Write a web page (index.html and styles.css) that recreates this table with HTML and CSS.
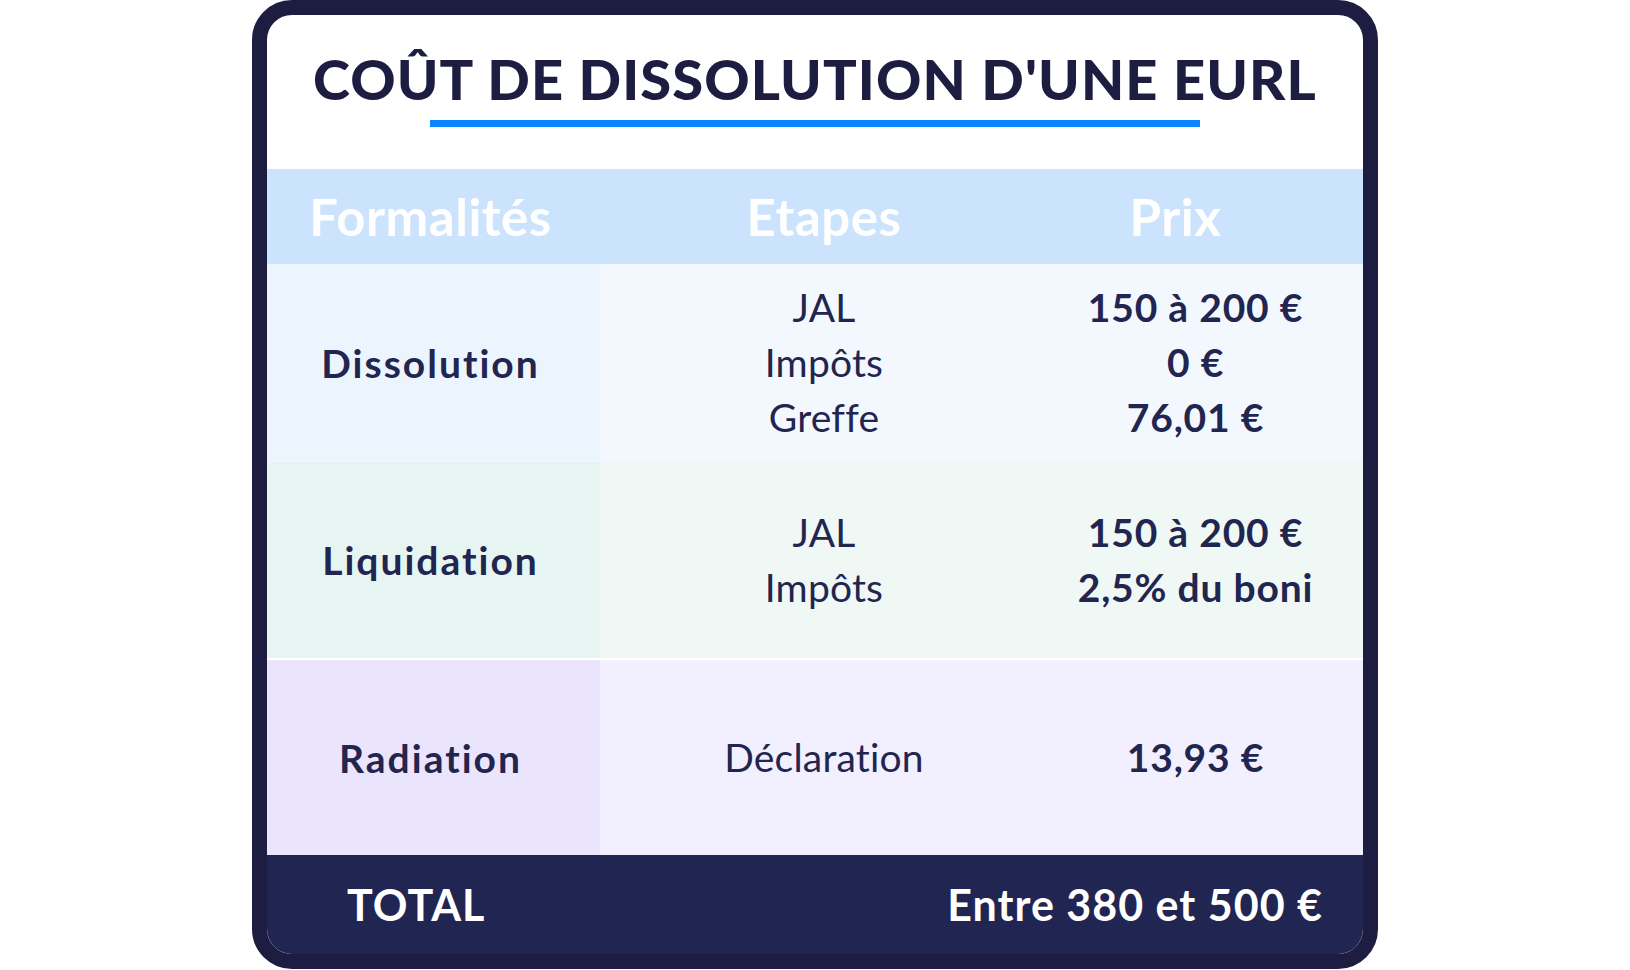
FILE: index.html
```html
<!DOCTYPE html>
<html lang="fr">
<head>
<meta charset="utf-8">
<title>Coût de dissolution d'une EURL</title>
<link rel="stylesheet" href="styles.css">
</head>
<body>
<div class="frame">
  <div class="title-block">
    <h1 class="title">COÛT DE DISSOLUTION D'UNE EURL</h1>
    <div class="underline"></div>
  </div>
  <div class="head-row">
    <div class="h-col1">Formalités</div>
    <div class="h-col2">Etapes</div>
    <div class="h-col3">Prix</div>
  </div>
  <div class="row row-blue">
    <div class="c1">Dissolution</div>
    <div class="c2"><span>JAL</span><span>Impôts</span><span>Greffe</span></div>
    <div class="c3"><span>150 à 200 €</span><span>0 €</span><span>76,01 €</span></div>
  </div>
  <div class="row row-green">
    <div class="c1">Liquidation</div>
    <div class="c2"><span>JAL</span><span>Impôts</span></div>
    <div class="c3"><span>150 à 200 €</span><span>2,5% du boni</span></div>
  </div>
  <div class="row row-purple">
    <div class="c1">Radiation</div>
    <div class="c2"><span>Déclaration</span></div>
    <div class="c3"><span>13,93 €</span></div>
  </div>
  <div class="total">
    <div class="t-label">TOTAL</div>
    <div class="t-value">Entre 380 et 500 €</div>
  </div>
</div>
</body>
</html>
```
FILE: styles.css
```css
* { box-sizing: border-box; }
html, body { margin: 0; padding: 0; background: #ffffff; }
body {
  width: 1630px;
  height: 970px;
  display: flex;
  justify-content: center;
  align-items: flex-start;
  font-family: Lato, "Open Sans", "Liberation Sans", sans-serif;
  font-variant-ligatures: none;
  font-feature-settings: "liga" 0, "clig" 0;
  color: #22254f;
}
.frame {
  width: 1126px;
  height: 969px;
  border: 15px solid #1c1d40;
  border-radius: 40px;
  background: #ffffff;
  overflow: hidden;
  display: flex;
  flex-direction: column;
}
.title-block {
  height: 154px;
  display: flex;
  flex-direction: column;
  align-items: center;
  padding-top: 35px;
}
.title {
  margin: 0;
  font-size: 56px;
  font-weight: 900;
  letter-spacing: 1.1px;
  line-height: 58px;
  color: #1c1d40;
}
.underline {
  margin-top: 12px;
  width: 770px;
  height: 7px;
  background: #0a84ff;
}
.head-row {
  height: 95px;
  background: #cbe3fd;
  display: grid;
  grid-template-columns: 333px 448px 1fr;
  align-items: center;
  color: #ffffff;
  font-weight: 700;
  font-size: 51px;
  letter-spacing: 0.5px;
  text-align: center;
}
.h-col1 { padding-right: 6px; }
.h-col3 { padding-right: 60px; }
.row {
  display: grid;
  grid-template-columns: 333px 448px 1fr;
  height: 197px;
  font-size: 39px;
}
.row > div {
  display: flex;
  flex-direction: column;
  justify-content: center;
  align-items: center;
}
.row .c1 { font-weight: 700; letter-spacing: 2px; padding-right: 6px; }
.row .c2 { font-weight: 400; line-height: 55px; letter-spacing: 0.2px; }
.row .c3 { font-weight: 700; line-height: 55px; padding-right: 20px; letter-spacing: 0.8px; }
.row-blue .c1 { background: #ecf4fd; }
.row-blue .c2, .row-blue .c3 { background: #f2f8fd; }
.row-green { border-top: 1px solid #f1f8fc; }
.row-green .c1 { background: #e6f5f1; }
.row-green .c2, .row-green .c3 { background: #eff8f5; }
.row-purple { border-top: 2px solid #ffffff; }
.row-purple .c1 { background: #eae5fd; }
.row-purple .c2, .row-purple .c3 { background: #f2f0fe; }
.total {
  flex: 1;
  background: #212552;
  color: #ffffff;
  font-weight: 700;
  font-size: 43px;
  letter-spacing: 1px;
  display: flex;
  justify-content: space-between;
  align-items: center;
  padding: 0 40px 0 80px;
}
```
